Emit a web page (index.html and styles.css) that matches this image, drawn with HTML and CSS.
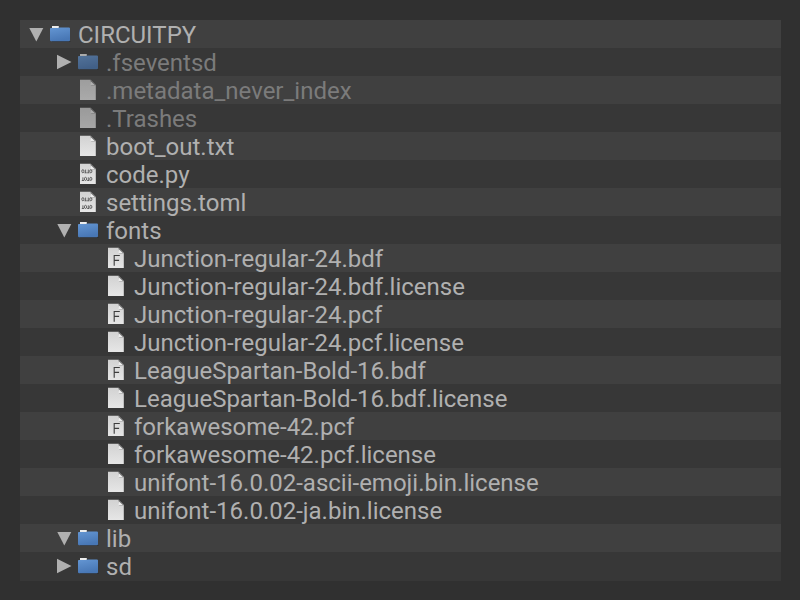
FILE: index.html
```
<!DOCTYPE html>
<html lang="en"><head><meta charset="utf-8"><title>CIRCUITPY</title><link rel="stylesheet" href="styles.css"></head>
<body>
<svg class="defs" width="0" height="0">
<defs>
<linearGradient id="blue" x1="0" y1="0" x2=".3" y2="1"><stop offset="0" stop-color="#6496d3"/><stop offset="1" stop-color="#4877b5"/></linearGradient>
<linearGradient id="paper" x1="0" y1="0" x2="0" y2="1"><stop offset="0" stop-color="#d2d2d2"/><stop offset="1" stop-color="#e6e6e6"/></linearGradient>
</defs>
<symbol id="folder" viewBox="0 0 24 24"><path d="M4 19h18.500v.9H4z" fill="#222" opacity=".5"/><path d="M4 4h6.800v3H4z" fill="#ededed"/><path d="M2.800 6h7.400l1.500-.6h9.200q1.100 0 1.100 1.100V18q0 1.200-1.200 1.200H3.200Q2 19.200 2 18V6.800q0-.8.8-.8z" fill="url(#blue)"/></symbol>
<symbol id="file" viewBox="0 0 24 24"><path d="M4 1.800h10.600l5.200 5.200v15.100H4z" fill="url(#paper)"/><path d="M14.400 1.800l5.400 5.400h-4.600z" fill="#666"/><path d="M14.600 3l4.200 4h-4.200z" fill="#eee"/></symbol>
<symbol id="binary" viewBox="0 0 24 24"><use href="#file"/><g fill="none" stroke="#484848" stroke-width=".8"><ellipse cx="6.900" cy="9.200" rx="1.100" ry="1.600"/><path d="M9.600 7.600v3.200m-1.100 0h2.200M12.300 7.600v3.200m-1.100 0h2.200"/><ellipse cx="14.800" cy="9.200" rx="1.100" ry="1.600"/><path d="M6.900 15.300v3.200m-1.100 0h2.200M12.300 15.300v3.200m-1.100 0h2.200"/><ellipse cx="9.500" cy="16.900" rx="1.100" ry="1.600"/><ellipse cx="14.800" cy="16.900" rx="1.100" ry="1.600"/></g></symbol>
<symbol id="font" viewBox="0 0 24 24"><use href="#file"/><path d="M10.200 19.800V9.500H15.800M10.200 14.400h4.900" fill="none" stroke="#3d3d3d" stroke-width="1.100"/></symbol>
<symbol id="open" viewBox="0 0 16 16"><path d="M1.300 2h14L8.300 15.500z"/></symbol>
<symbol id="closed" viewBox="0 0 16 16"><path d="M1 .7v14.500L15.500 8z"/></symbol>
</svg>
<main class="tree" id="tree"></main>
<script src="tree.js"></script>
</body></html>
```
FILE: styles.css
```
body{margin:0;background:#303030}
.defs{display:block}
.tree{box-sizing:border-box;width:800px;height:600px;padding:20px 19px 19px 20px;font:24px/30px Roboto,sans-serif;color:#b0b0b0}
.row{display:flex;height:28px;white-space:pre;background:#373737}
.row:nth-child(odd){background:#404040}
.row:last-child{height:29px}
.d0{padding-left:8px}.d1{padding-left:36px}.d2{padding-left:64px}
.arrow{width:16px;height:16px;margin:6px 4px 0 0;fill:#b0b0b0}
.icon{width:24px;height:24px;margin:2px 6px 0 0}
.muted{color:#7b7b7b}
.muted .icon{opacity:.64}
```
FILE: tree.js
```
const rows=[[0,'open','folder','CIRCUITPY'],[1,'closed','folder','.fseventsd',1],[1,'','file','.metadata_never_index',1],[1,'','file','.Trashes',1],[1,'','file','boot_out.txt'],[1,'','binary','code.py'],[1,'','binary','settings.toml'],[1,'open','folder','fonts'],[2,'','font','Junction-regular-24.bdf'],[2,'','file','Junction-regular-24.bdf.license'],[2,'','font','Junction-regular-24.pcf'],[2,'','file','Junction-regular-24.pcf.license'],[2,'','font','LeagueSpartan-Bold-16.bdf'],[2,'','file','LeagueSpartan-Bold-16.bdf.license'],[2,'','font','forkawesome-42.pcf'],[2,'','file','forkawesome-42.pcf.license'],[2,'','file','unifont-16.0.02-ascii-emoji.bin.license'],[2,'','file','unifont-16.0.02-ja.bin.license'],[1,'open','folder','lib'],[1,'closed','folder','sd']];
document.getElementById('tree').innerHTML=rows.map(([d,a,i,t,m])=>`<div class="row d${d} ${m?'muted':''}"><svg class="arrow">${a?`<use href="#${a}"/>`:''}</svg><svg class="icon"><use href="#${i}"/></svg><span>${t}</span></div>`).join('');
```
